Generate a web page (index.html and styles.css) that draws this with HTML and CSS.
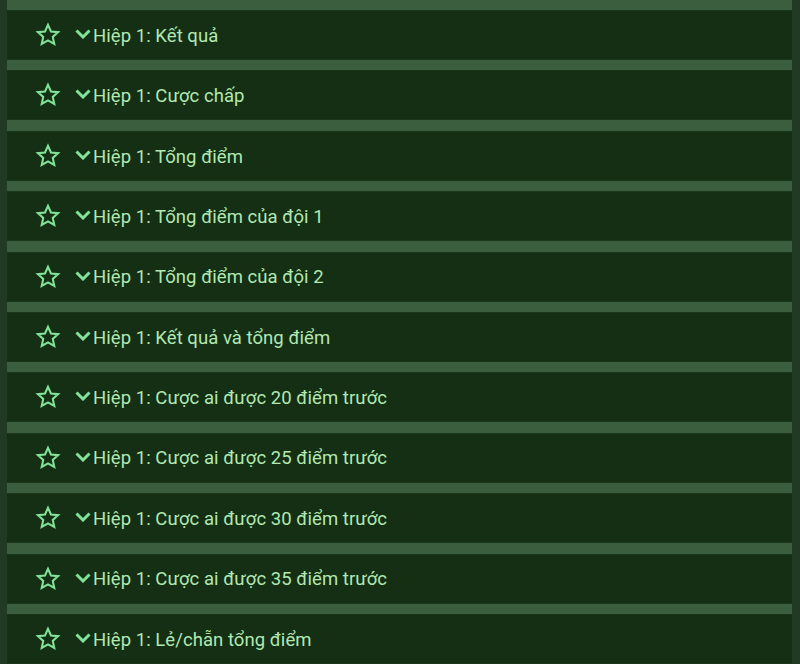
FILE: index.html
```html
<!DOCTYPE html>
<html lang="vi">
<head>
    <meta charset="UTF-8">
    <meta name="viewport" content="width=device-width, initial-scale=1.0">
    <title>Hiệp 1</title>
    <link rel="stylesheet" href="styles.css">
</head>
<body>
    <div class="market-list">
        <div class="market-row"><span class="star"><svg viewBox="0 0 24 24"><path d="M12 2.6l2.75 6.1 6.6.65-4.95 4.45 1.4 6.5L12 16.95 6.2 20.3l1.4-6.5-4.95-4.45 6.6-.65z"/></svg></span><span class="chevron"><svg viewBox="0 0 16 10"><path d="M1.5 1.5L8 8l6.5-6.5"/></svg></span><span class="market-name">Hiệp 1: Kết quả</span></div>
        <div class="market-row"><span class="star"><svg viewBox="0 0 24 24"><path d="M12 2.6l2.75 6.1 6.6.65-4.95 4.45 1.4 6.5L12 16.95 6.2 20.3l1.4-6.5-4.95-4.45 6.6-.65z"/></svg></span><span class="chevron"><svg viewBox="0 0 16 10"><path d="M1.5 1.5L8 8l6.5-6.5"/></svg></span><span class="market-name">Hiệp 1: Cược chấp</span></div>
        <div class="market-row"><span class="star"><svg viewBox="0 0 24 24"><path d="M12 2.6l2.75 6.1 6.6.65-4.95 4.45 1.4 6.5L12 16.95 6.2 20.3l1.4-6.5-4.95-4.45 6.6-.65z"/></svg></span><span class="chevron"><svg viewBox="0 0 16 10"><path d="M1.5 1.5L8 8l6.5-6.5"/></svg></span><span class="market-name">Hiệp 1: Tổng điểm</span></div>
        <div class="market-row"><span class="star"><svg viewBox="0 0 24 24"><path d="M12 2.6l2.75 6.1 6.6.65-4.95 4.45 1.4 6.5L12 16.95 6.2 20.3l1.4-6.5-4.95-4.45 6.6-.65z"/></svg></span><span class="chevron"><svg viewBox="0 0 16 10"><path d="M1.5 1.5L8 8l6.5-6.5"/></svg></span><span class="market-name">Hiệp 1: Tổng điểm của đội 1</span></div>
        <div class="market-row"><span class="star"><svg viewBox="0 0 24 24"><path d="M12 2.6l2.75 6.1 6.6.65-4.95 4.45 1.4 6.5L12 16.95 6.2 20.3l1.4-6.5-4.95-4.45 6.6-.65z"/></svg></span><span class="chevron"><svg viewBox="0 0 16 10"><path d="M1.5 1.5L8 8l6.5-6.5"/></svg></span><span class="market-name">Hiệp 1: Tổng điểm của đội 2</span></div>
        <div class="market-row"><span class="star"><svg viewBox="0 0 24 24"><path d="M12 2.6l2.75 6.1 6.6.65-4.95 4.45 1.4 6.5L12 16.95 6.2 20.3l1.4-6.5-4.95-4.45 6.6-.65z"/></svg></span><span class="chevron"><svg viewBox="0 0 16 10"><path d="M1.5 1.5L8 8l6.5-6.5"/></svg></span><span class="market-name">Hiệp 1: Kết quả và tổng điểm</span></div>
        <div class="market-row"><span class="star"><svg viewBox="0 0 24 24"><path d="M12 2.6l2.75 6.1 6.6.65-4.95 4.45 1.4 6.5L12 16.95 6.2 20.3l1.4-6.5-4.95-4.45 6.6-.65z"/></svg></span><span class="chevron"><svg viewBox="0 0 16 10"><path d="M1.5 1.5L8 8l6.5-6.5"/></svg></span><span class="market-name">Hiệp 1: Cược ai được 20 điểm trước</span></div>
        <div class="market-row"><span class="star"><svg viewBox="0 0 24 24"><path d="M12 2.6l2.75 6.1 6.6.65-4.95 4.45 1.4 6.5L12 16.95 6.2 20.3l1.4-6.5-4.95-4.45 6.6-.65z"/></svg></span><span class="chevron"><svg viewBox="0 0 16 10"><path d="M1.5 1.5L8 8l6.5-6.5"/></svg></span><span class="market-name">Hiệp 1: Cược ai được 25 điểm trước</span></div>
        <div class="market-row"><span class="star"><svg viewBox="0 0 24 24"><path d="M12 2.6l2.75 6.1 6.6.65-4.95 4.45 1.4 6.5L12 16.95 6.2 20.3l1.4-6.5-4.95-4.45 6.6-.65z"/></svg></span><span class="chevron"><svg viewBox="0 0 16 10"><path d="M1.5 1.5L8 8l6.5-6.5"/></svg></span><span class="market-name">Hiệp 1: Cược ai được 30 điểm trước</span></div>
        <div class="market-row"><span class="star"><svg viewBox="0 0 24 24"><path d="M12 2.6l2.75 6.1 6.6.65-4.95 4.45 1.4 6.5L12 16.95 6.2 20.3l1.4-6.5-4.95-4.45 6.6-.65z"/></svg></span><span class="chevron"><svg viewBox="0 0 16 10"><path d="M1.5 1.5L8 8l6.5-6.5"/></svg></span><span class="market-name">Hiệp 1: Cược ai được 35 điểm trước</span></div>
        <div class="market-row"><span class="star"><svg viewBox="0 0 24 24"><path d="M12 2.6l2.75 6.1 6.6.65-4.95 4.45 1.4 6.5L12 16.95 6.2 20.3l1.4-6.5-4.95-4.45 6.6-.65z"/></svg></span><span class="chevron"><svg viewBox="0 0 16 10"><path d="M1.5 1.5L8 8l6.5-6.5"/></svg></span><span class="market-name">Hiệp 1: Lẻ/chẵn tổng điểm</span></div>
    </div>
</body>
</html>
```

FILE: styles.css
```css
:root {
    --bg-outer: #203a24;
    --bg-gap: #3a5e3e;
    --bg-row: #142f14;
    --text-main: #b2e8b2;
    --icon-color: #82e29a;
}

* {
    margin: 0;
    padding: 0;
    box-sizing: border-box;
}

html, body {
    height: 100%;
    overflow: hidden;
}

body {
    font-family: Roboto, "Noto Sans", sans-serif;
    background: var(--bg-outer);
    color: var(--text-main);
}

.market-list {
    margin: 0 8px 0 7px;
    padding-top: 10px;
    background: var(--bg-gap);
    display: flex;
    flex-direction: column;
    gap: 10.4px;
    min-height: 100%;
}

.market-row {
    height: 50px;
    flex-shrink: 0;
    background: var(--bg-row);
    border-top: 1px solid #1a361b;
    border-bottom: 1px solid #1a361b;
    display: flex;
    align-items: center;
    padding-left: 28px;
}

.star {
    width: 26px;
    height: 26px;
    display: flex;
}

.star svg {
    width: 26px;
    height: 26px;
    fill: none;
    stroke: var(--icon-color);
    stroke-width: 1.9;
    stroke-linejoin: miter;
}

.chevron {
    display: flex;
    margin-left: 14px;
    margin-right: 2px;
    margin-top: -2px;
}

.chevron svg {
    width: 16px;
    height: 10px;
    fill: none;
    stroke: var(--icon-color);
    stroke-width: 3;
}

.market-name {
    font-size: 18.5px;
    line-height: 1;
    margin-top: 2px;
    letter-spacing: 0.05px;
}
```
